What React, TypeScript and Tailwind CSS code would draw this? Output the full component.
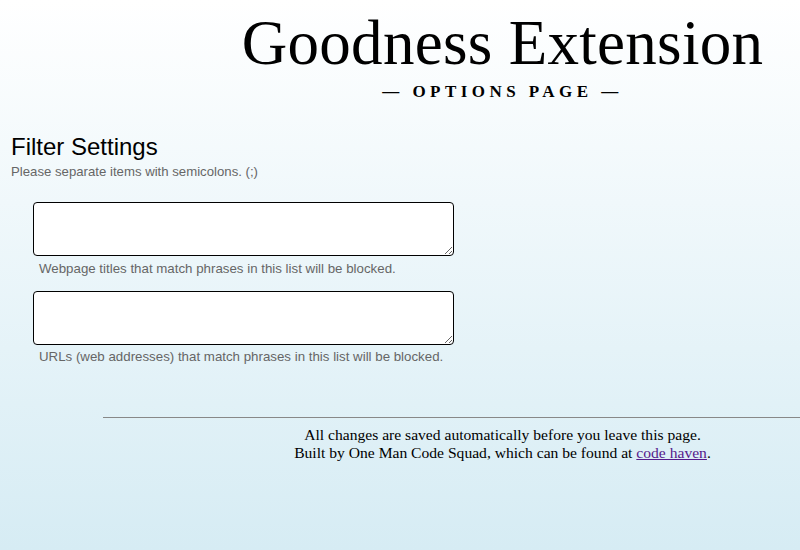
import React from "react";

export default function App() {
  return (
    <div className="min-h-[550px] w-full bg-gradient-to-b from-[#ffffff] to-[#d6ecf4] font-['Liberation_Sans',Arial,sans-serif] text-black">
      <header className="pl-[205px] pt-[12px] text-center font-['Liberation_Serif','Times_New_Roman',serif]">
        <h1 className="text-[63px] leading-[63px] tracking-[0.3px]">Goodness Extension</h1>
        <div className="mt-[7px] text-[17px] leading-[20px] font-bold tracking-[4.45px]">— OPTIONS PAGE —</div>
      </header>
      <main className="px-[11px] pt-[31px]">
        <h2 className="text-[24px] leading-[28px]">Filter Settings</h2>
        <p className="mt-[3px] text-[13.2px] leading-[16px] text-[#666]">Please separate items with semicolons. (;)</p>
        <div className="pl-[22px] pt-[22px]">
          <textarea className="block h-[54px] w-[421px] rounded-[4px] border border-black bg-white" />
          <p className="mt-[5px] pl-[6px] text-[13.3px] leading-[16px] text-[#666]">Webpage titles that match phrases in this list will be blocked.</p>
          <textarea className="mt-[14px] block h-[54px] w-[421px] rounded-[4px] border border-black bg-white" />
          <p className="mt-[4px] pl-[6px] text-[13.3px] leading-[16px] text-[#666]">URLs (web addresses) that match phrases in this list will be blocked.</p>
        </div>
      </main>
      <footer className="pt-[52px] font-['Liberation_Serif','Times_New_Roman',serif]">
        <div className="ml-[103px] h-px bg-[#888]" />
        <div className="pl-[205px] pt-[8px] text-center text-[15.6px] leading-[18px]">
          <p>All changes are saved automatically before you leave this page.</p>
          <p>
            Built by One Man Code Squad, which can be found at{" "}
            <a href="#" className="text-[#551a8b] underline">code haven</a>.
          </p>
        </div>
      </footer>
    </div>
  );
}
